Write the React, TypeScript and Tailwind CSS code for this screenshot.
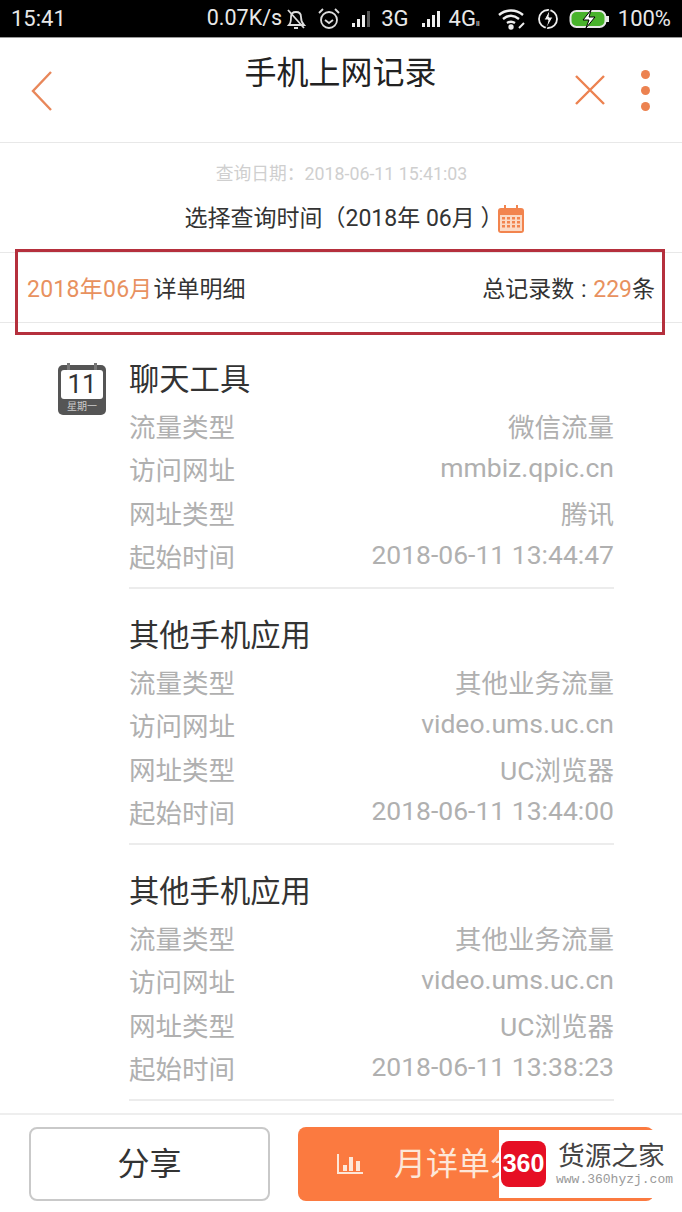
import { Fragment } from 'react'

const records = [
  { title: '聊天工具', type: '微信流量', url: 'mmbiz.qpic.cn', site: '腾讯', time: '2018-06-11 13:44:47' },
  { title: '其他手机应用', type: '其他业务流量', url: 'video.ums.uc.cn', site: 'UC浏览器', time: '2018-06-11 13:44:00' },
  { title: '其他手机应用', type: '其他业务流量', url: 'video.ums.uc.cn', site: 'UC浏览器', time: '2018-06-11 13:38:23' },
]

function Signal({ dim }: { dim?: boolean }) {
  return (
    <svg width="20" height="18" viewBox="0 0 20 18">
      <rect x="1" y="13" width="3" height="4" fill="#eee" />
      <rect x="6" y="9" width="3" height="8" fill="#eee" />
      <rect x="11" y="5" width="3" height="12" fill="#eee" />
      <rect x="16" y="1" width="3" height="16" fill={dim ? '#555' : '#eee'} />
    </svg>
  )
}

function StatusBar() {
  return (
    <div className="h-[38px] shrink-0 bg-black border-b border-[#999] flex items-center justify-between pl-[11px] pr-[11px] text-[#e8e8e8] text-[22px]">
      <span>15:41</span>
      <div className="flex items-center">
        <span className="mr-[3px] text-[21.5px]">0.07K/s</span>
        <svg width="22" height="24" viewBox="0 0 22 24" fill="none" stroke="#ddd" strokeWidth="1.8" className="mr-[10px]">
          <path d="M4 18c2-2 2-5 2-8 0-3 2-5 5-5s5 2 5 5c0 3 1 6 3 8H4zM9 21h4M3 3l16 18" />
        </svg>
        <svg width="24" height="24" viewBox="0 0 24 24" fill="none" stroke="#ddd" strokeWidth="1.8" className="mr-[10px]">
          <circle cx="12" cy="13" r="8" />
          <path d="M8 13l4 3 4-3M2 6l4-4M22 6l-4-4" />
        </svg>
        <Signal dim />
        <span className="ml-[10px] mr-[12px]">3G</span>
        <Signal />
        <span className="ml-[8px]">4G</span>
        <span className="text-[8px] mt-[10px] mr-[17px]">ll</span>
        <svg width="30" height="22" viewBox="0 0 30 22" fill="none" stroke="#eee" strokeWidth="2.4" className="mr-[9px]">
          <path d="M2 7c7-6 17-6 24 0M6 11c5-4 11-4 16 0M10 15c3-2 5-2 8 0" />
          <circle cx="14" cy="19" r="1.5" fill="#eee" />
          <path d="M22 20l5-5" strokeWidth="2" />
        </svg>
        <svg width="24" height="24" viewBox="0 0 24 24" fill="none" className="mr-[9px]">
          <circle cx="12" cy="12" r="9" stroke="#eee" strokeWidth="1.8" />
          <path d="M14 2L8 13h4l-2 9 7-12h-4z" fill="#eee" stroke="#000" />
        </svg>
        <svg width="40" height="20" viewBox="0 0 40 20" className="mr-[9px]">
          <rect x="1.5" y="2" width="35" height="16" rx="6" fill="#49b32c" stroke="#e8e8e8" strokeWidth="2" />
          <rect x="37" y="7" width="3" height="6" fill="#e8e8e8" />
          <path d="M22 1l-8 10h6l-3 8 9-11h-6z" fill="#fff" stroke="#000" strokeWidth="1" />
        </svg>
        <span>100%</span>
      </div>
    </div>
  )
}

function Header() {
  return (
    <div className="h-[105px] shrink-0 bg-white border-b border-[#e8e8e8] flex justify-between pl-[30px] pr-[32px]">
      <svg width="24" height="42" viewBox="0 0 24 42" fill="none" stroke="#e8875a" strokeWidth="2.4" className="mt-[32px]">
        <path d="M21 2L3 21l18 19" />
      </svg>
      <div className="text-[32px] leading-[40px] text-[#222] mt-[15px] ml-[53px]">手机上网记录</div>
      <div className="flex items-start">
        <svg width="32" height="32" viewBox="0 0 32 32" fill="none" stroke="#ec8250" strokeWidth="2.4" className="mt-[36px] mr-[35px]">
          <path d="M2 2l28 28M30 2L2 30" />
        </svg>
        <div className="flex flex-col gap-[7px] mt-[32px]">
          <span className="block w-[9px] h-[9px] rounded-full bg-[#ec8250]" />
          <span className="block w-[9px] h-[9px] rounded-full bg-[#ec8250]" />
          <span className="block w-[9px] h-[9px] rounded-full bg-[#ec8250]" />
        </div>
      </div>
    </div>
  )
}

function QueryBlock() {
  return (
    <div className="h-[110px] shrink-0 border-b border-[#e8e8e8] flex flex-col items-center">
      <div className="text-[17.8px] leading-[24px] text-[#cfcfcf] mt-[19px] ml-[1px]">查询日期：2018-06-11 15:41:03</div>
      <div className="flex items-center mt-[17px] ml-[28px] text-[23px] leading-[32px] text-[#333]">
        <span>选择查询时间（2018年 06月 ）</span>
        <svg width="28" height="30" viewBox="0 0 28 30" className="-ml-[6px]">
          <rect x="1" y="4" width="26" height="25" rx="3" fill="#f2844e" />
          <rect x="3" y="11" width="22" height="16" fill="#fbd9c4" />
          <rect x="7" y="1" width="2" height="6" fill="#f2844e" />
          <rect x="19" y="1" width="2" height="6" fill="#f2844e" />
          {[5, 10, 15, 20].map((x) =>
            [13, 17, 21].map((y) => <rect key={`${x}-${y}`} x={x} y={y} width="3" height="2.5" fill="#f2844e" />),
          )}
        </svg>
      </div>
    </div>
  )
}

function SummaryRow() {
  return (
    <div className="h-[70px] shrink-0 border-b border-[#e8e8e8] flex items-center justify-between pl-[27px] pr-[27px] pt-[5px] text-[23px] text-[#333]">
      <div>
        <span className="text-[#e8915f] tracking-[0.25px]">2018年06月</span>
        <span className="ml-[1px]">详单明细</span>
      </div>
      <div className="flex items-center">
        总记录数<span className="inline-block w-[19px] text-center">:</span>
        <span className="text-[#e8915f]">229</span>条
      </div>
    </div>
  )
}

function DateBadge() {
  return (
    <div className="relative w-[48px] h-[50px] rounded-[5px] bg-[#555] flex flex-col items-center">
      <span className="absolute -top-[2px] left-[9px] w-[3px] h-[7px] bg-[#777]" />
      <span className="absolute -top-[2px] right-[9px] w-[3px] h-[7px] bg-[#777]" />
      <div className="w-[42px] h-[29px] mt-[5px] bg-white rounded-[3px] text-[26px] leading-[28px] text-center text-[#333]">11</div>
      <div className="text-[10px] leading-[14px] text-[#ccc] mt-[1px]">星期一</div>
    </div>
  )
}

function RecordItem({ title, type, url, site, time }: (typeof records)[number]) {
  const rows = [
    { label: '流量类型', value: type, latin: false },
    { label: '访问网址', value: url, latin: true },
    { label: '网址类型', value: site, latin: false },
    { label: '起始时间', value: time, latin: true },
  ]
  return (
    <div className="h-[256px] shrink-0 border-b-2 border-[#ececec]">
      <div className="text-[30.3px] leading-[40px] text-[#333] mt-[27px]">{title}</div>
      <div className="grid grid-cols-[auto_1fr] auto-rows-[43.5px] items-center text-[26.5px] text-[#b0b0b0] mt-[6px]">
        {rows.map((row) => (
          <Fragment key={row.label}>
            <span>{row.label}</span>
            <span className={row.latin ? 'text-right mb-[7px]' : 'text-right'}>{row.value}</span>
          </Fragment>
        ))}
      </div>
    </div>
  )
}

function Footer() {
  return (
    <div className="relative h-[99px] shrink-0 border-t-2 border-[#eee] bg-white flex gap-[28px] pl-[29px] pr-[28px] pt-[12px]">
      <div className="w-[241px] h-[74px] rounded-[8px] border-2 border-[#c9c9c9] flex items-center justify-center text-[32px] text-[#333]">分享</div>
      <div className="flex-1 h-[74px] rounded-[8px] bg-[#fb7a40] flex items-center pl-[38px] text-[32px] text-[#fde7d8] overflow-hidden">
        <svg width="28" height="24" viewBox="0 0 28 24" fill="#fde7d8" className="mr-[30px]">
          <rect x="1" y="2" width="2" height="20" />
          <rect x="1" y="20" width="26" height="2" />
          <rect x="7" y="13" width="4" height="6" />
          <rect x="13" y="5" width="4" height="14" />
          <rect x="20" y="9" width="4" height="10" />
        </svg>
        {/* the last character is cut off by the watermark */}
        <span className="w-[105px] overflow-hidden whitespace-nowrap">月详单分</span>
      </div>
      {/* watermark sits over the button */}
      <div className="absolute left-[499px] top-[15px] w-[183px] h-[68px] bg-white flex items-center pl-[2px]">
        <div className="w-[45px] h-[46px] rounded-[8px] bg-[#e60f24] text-white font-bold text-[25px] flex items-center justify-center shrink-0 font-['Liberation_Sans',sans-serif]">
          360
        </div>
        <div className="ml-[10px]">
          <div className="text-[26.7px] leading-[30px] text-[#444] whitespace-nowrap ml-[2px]">货源之家</div>
          <div className="text-[13px] leading-[14px] text-[#999] font-['Liberation_Mono',monospace] whitespace-nowrap mt-[2px]">www.360hyzj.com</div>
        </div>
      </div>
    </div>
  )
}

export default function App() {
  return (
    <div className="relative w-[682px] h-[1212px] overflow-hidden bg-white flex flex-col font-['Roboto','Noto_Sans_CJK_SC',sans-serif]">
      <StatusBar />
      <Header />
      <QueryBlock />
      <SummaryRow />
      <div className="flex-1 min-h-0 flex pl-[58px] pr-[68px] overflow-hidden">
        <div className="w-[71px] shrink-0 pt-[42px]">
          <DateBadge />
        </div>
        <div className="flex-1 flex flex-col pt-[10px]">
          {records.map((r, i) => (
            <RecordItem key={i} {...r} />
          ))}
        </div>
      </div>
      <Footer />
      {/* red annotation box drawn over the screenshot */}
      <div className="absolute left-[15px] top-[249px] w-[650px] h-[86px] border-[3px] border-[#b5303d]" />
    </div>
  )
}
